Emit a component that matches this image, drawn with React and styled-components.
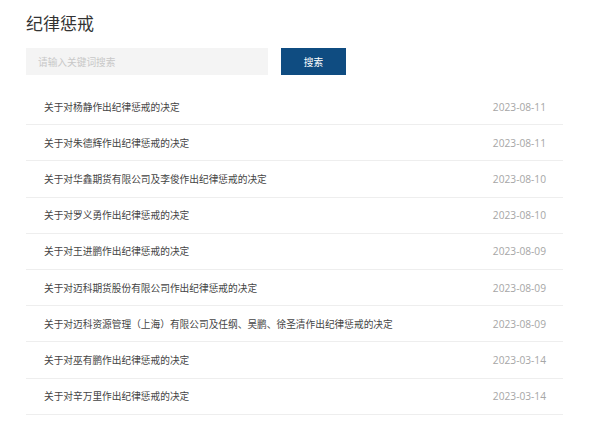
import React from "react";
import styled, { createGlobalStyle } from "styled-components";

const Global = createGlobalStyle`
  html, body { margin: 0; padding: 0; background: #fff; }
  body { font-family: "Noto Sans CJK SC", "Noto Sans", sans-serif; }
`;

const Page = styled.div`
  width: 596px;
  padding: 9px 33px 0 26px;
  box-sizing: border-box;
`;

const Title = styled.h1`
  margin: 0;
  font-size: 17px;
  line-height: 28px;
  font-weight: 400;
  color: #333;
`;

const SearchBar = styled.div`
  display: flex;
  gap: 13px;
  margin-top: 11px;
  height: 27px;
`;

const Input = styled.input`
  width: 242px;
  height: 27px;
  box-sizing: border-box;
  border: none;
  outline: none;
  background: #f4f4f4;
  padding: 0 12px;
  font-family: inherit;
  font-size: 9.7px;
  color: #333;
  &::placeholder { color: #c8c8c8; }
`;

const Button = styled.button`
  width: 65px;
  height: 27px;
  border: none;
  background: #0f4c81;
  color: #fff;
  font-family: inherit;
  font-size: 9.7px;
  padding: 0;
`;

const List = styled.ul`
  list-style: none;
  margin: 14px 0 0;
  padding: 0;
`;

const Row = styled.li`
  display: flex;
  align-items: center;
  justify-content: space-between;
  height: 36.2px;
  box-sizing: border-box;
  padding: 0 17px 0 18px;
  border-bottom: 1px solid #eeeeee;
  font-size: 9.7px;
`;

const RowTitle = styled.span`
  color: #444;
`;

const RowDate = styled.span`
  color: #a6a6a6;
  font-family: "Open Sans", "Noto Sans", sans-serif;
  font-size: 10.2px;
`;

const items = [
  ["关于对杨静作出纪律惩戒的决定", "2023-08-11"],
  ["关于对朱德辉作出纪律惩戒的决定", "2023-08-11"],
  ["关于对华鑫期货有限公司及李俊作出纪律惩戒的决定", "2023-08-10"],
  ["关于对罗义勇作出纪律惩戒的决定", "2023-08-10"],
  ["关于对王进鹏作出纪律惩戒的决定", "2023-08-09"],
  ["关于对迈科期货股份有限公司作出纪律惩戒的决定", "2023-08-09"],
  ["关于对迈科资源管理（上海）有限公司及任纲、吴鹏、徐圣清作出纪律惩戒的决定", "2023-08-09"],
  ["关于对巫有鹏作出纪律惩戒的决定", "2023-03-14"],
  ["关于对辛万里作出纪律惩戒的决定", "2023-03-14"],
];

export default function App() {
  return (
    <Page>
      <Global />
      <Title>纪律惩戒</Title>
      <SearchBar>
        <Input placeholder="请输入关键词搜索" />
        <Button>搜索</Button>
      </SearchBar>
      <List>
        {items.map(([t, d], i) => (
          <Row key={i}>
            <RowTitle>{t}</RowTitle>
            <RowDate>{d}</RowDate>
          </Row>
        ))}
      </List>
    </Page>
  );
}
